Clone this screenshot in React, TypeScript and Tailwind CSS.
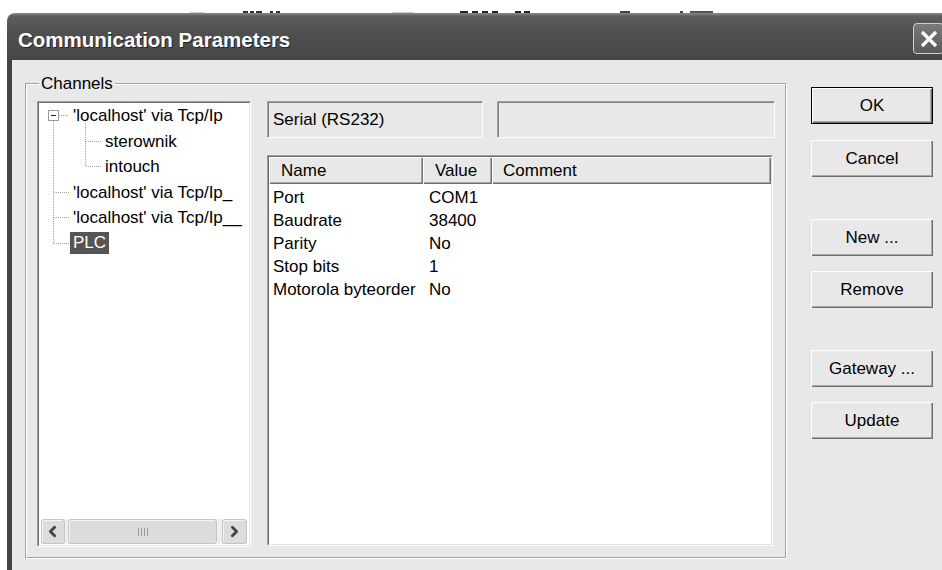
import { ChevronLeft, ChevronRight } from "lucide-react";

type Node = { label: string; depth: number; selected?: boolean };

const channels: Node[] = [
  { label: "'localhost' via Tcp/Ip", depth: 0 },
  { label: "sterownik", depth: 1 },
  { label: "intouch", depth: 1 },
  { label: "'localhost' via Tcp/Ip_", depth: 0 },
  { label: "'localhost' via Tcp/Ip__", depth: 0 },
  { label: "PLC", depth: 0, selected: true },
];

const params = [
  { name: "Port", value: "COM1" },
  { name: "Baudrate", value: "38400" },
  { name: "Parity", value: "No" },
  { name: "Stop bits", value: "1" },
  { name: "Motorola byteorder", value: "No" },
];

const raised = "shadow-[inset_1px_1px_#ffffff,inset_-1px_-1px_#6e6e6e,inset_-2px_-2px_#a8a8a8]";

function Sunken({ className, children }: { className: string; children?: React.ReactNode }) {
  return (
    <div className={`border border-t-[#a0a0a0] border-l-[#a0a0a0] border-r-white border-b-white ${className}`}>
      <div className="flex h-full flex-col border border-t-[#696969] border-l-[#696969] border-r-[#e3e3e3] border-b-[#e3e3e3] bg-white">
        {children}
      </div>
    </div>
  );
}

function StaticBox({ className, text }: { className: string; text?: string }) {
  return (
    <div className={`h-[37px] border border-t-[#a0a0a0] border-l-[#a0a0a0] border-r-white border-b-white ${className}`}>
      <div className="flex h-full items-center border-t border-l border-t-[#808080] border-l-[#808080] pl-[4px]">{text}</div>
    </div>
  );
}

function DlgButton({ label, isDefault }: { label: string; isDefault?: boolean }) {
  return (
    <button
      type="button"
      className={`h-[37px] w-[122px] bg-[#e8e8e8] text-[17px] text-black ${raised} ${isDefault ? "border border-black" : ""}`}
    >
      {label}
    </button>
  );
}

function TreeLines() {
  // dotted connectors + the collapse box of the first root
  const dot = { stroke: "#a0a0a0", strokeDasharray: "1 1", strokeWidth: 1 };
  return (
    <svg className="pointer-events-none absolute left-0 top-0" width="210" height="160">
      <line x1="14.5" y1="18" x2="14.5" y2="141" {...dot} />
      <line x1="20" y1="12.5" x2="30" y2="12.5" {...dot} />
      <line x1="15" y1="89.5" x2="30" y2="89.5" {...dot} />
      <line x1="15" y1="114.5" x2="30" y2="114.5" {...dot} />
      <line x1="15" y1="140.5" x2="30" y2="140.5" {...dot} />
      <line x1="46.5" y1="20" x2="46.5" y2="64" {...dot} />
      <line x1="47" y1="38.5" x2="62" y2="38.5" {...dot} />
      <line x1="47" y1="63.5" x2="62" y2="63.5" {...dot} />
      <rect x="9.5" y="7.5" width="10" height="10" fill="#fff" stroke="#9a9a9a" />
      <line x1="12" y1="12.5" x2="17" y2="12.5" stroke="#222" />
    </svg>
  );
}

function ScrollBar() {
  return (
    <div className="mx-[2px] mb-[1px] flex h-[25px] items-stretch bg-[#efefef]">
      <div className="flex w-[24px] items-center justify-center rounded-[3px] border border-[#c4c4c4] bg-[#dcdcdc] shadow-[inset_1px_1px_#f4f4f4]">
        <ChevronLeft size={17} strokeWidth={4} color="#454545" />
      </div>
      <div className="ml-[3px] flex w-[150px] items-center justify-center gap-[2px] rounded-[3px] border border-[#c4c4c4] bg-[#dcdcdc] shadow-[inset_1px_1px_#f4f4f4]">
        <span className="h-[8px] w-px bg-[#9c9c9c]" />
        <span className="h-[8px] w-px bg-[#9c9c9c]" />
        <span className="h-[8px] w-px bg-[#9c9c9c]" />
        <span className="h-[8px] w-px bg-[#9c9c9c]" />
      </div>
      <div className="ml-[5px] flex w-[25px] items-center justify-center rounded-[3px] border border-[#c4c4c4] bg-[#dcdcdc] shadow-[inset_1px_1px_#f4f4f4]">
        <ChevronRight size={17} strokeWidth={4} color="#454545" />
      </div>
    </div>
  );
}

export default function App() {
  return (
    <div className="h-[570px] w-[942px] overflow-hidden bg-white font-['Liberation_Sans',Arial,sans-serif] text-[17px] text-black">
      {/* bits of the window behind, peeking over the title bar */}
      <div className="relative h-[13px]">
        <span className="absolute left-[190px] top-[12px] h-px w-[14px] bg-[#c8c8c8]" />
        <span className="absolute left-[243px] top-[11px] h-[2px] w-[5px] bg-[#333]" />
        <span className="absolute left-[250px] top-[11px] h-[2px] w-[4px] bg-[#333]" />
        <span className="absolute left-[256px] top-[11px] h-[2px] w-[6px] bg-[#333]" />
        <span className="absolute left-[270px] top-[11px] h-[2px] w-[3px] bg-[#333]" />
        <span className="absolute left-[276px] top-[11px] h-[2px] w-[4px] bg-[#333]" />
        <span className="absolute left-[392px] top-[12px] h-px w-[22px] bg-[#c8c8c8]" />
        <span className="absolute left-[460px] top-[11px] h-[2px] w-[8px] bg-[#222]" />
        <span className="absolute left-[472px] top-[11px] h-[2px] w-[6px] bg-[#222]" />
        <span className="absolute left-[482px] top-[11px] h-[2px] w-[6px] bg-[#222]" />
        <span className="absolute left-[492px] top-[11px] h-[2px] w-[6px] bg-[#222]" />
        <span className="absolute left-[515px] top-[11px] h-[2px] w-[6px] bg-[#222]" />
        <span className="absolute left-[524px] top-[11px] h-[2px] w-[6px] bg-[#222]" />
        <span className="absolute left-[620px] top-[11px] h-[2px] w-[10px] bg-[#444]" />
        <span className="absolute left-[680px] top-[11px] h-[2px] w-[3px] bg-[#444]" />
        <span className="absolute left-[690px] top-[11px] h-[2px] w-[23px] bg-[#555]" />
      </div>

      <div className="ml-[7px] flex h-[557px] w-[940px] flex-col overflow-hidden rounded-tl-[8px]">
        <div className="flex h-[47px] shrink-0 items-start bg-[linear-gradient(to_bottom,#8c8c8c_0px,#5e5e5e_3px,#505050_18px,#474747_100%)] pl-[11px]">
          <span className="mt-[16px] text-[20.5px] font-bold leading-[21px] text-white [text-shadow:1px_1px_#262626]">
            Communication Parameters
          </span>
          <div className="ml-auto mr-[3px] mt-[10px] flex h-[31px] w-[31px] items-center justify-center rounded-[4px] border border-[#d0d0d0] bg-[linear-gradient(to_bottom,#7a7a7a,#5a5a5a)]">
            <svg width="20" height="20" viewBox="0 0 20 20">
              <path d="M3 3L17 17M17 3L3 17" stroke="#fff" strokeWidth="3.2" />
            </svg>
          </div>
        </div>

        <div className="flex flex-1 items-start border-l-[5px] border-l-[#434343] bg-[#e8e8e8] pl-[13px] pt-[23px]">
          {/* Channels group */}
          <div className="relative h-[476px] w-[762px] border border-t-[#a0a0a0] border-l-[#a0a0a0] border-r-white border-b-white">
            <div className="flex h-full border border-t-white border-l-white border-r-[#a0a0a0] border-b-[#a0a0a0] pl-[10px] pt-[16px]">
              <Sunken className="h-[446px] w-[214px]">
                <div className="relative flex flex-col">
                  <TreeLines />
                  {channels.map((n) => (
                    <div
                      key={n.label}
                      className={`flex h-[25.5px] items-center ${n.depth === 1 ? "pl-[66px]" : "pl-[31px]"}`}
                    >
                      {n.selected ? (
                        <span className="bg-[#555555] px-[3px] leading-[22px] text-white">{n.label}</span>
                      ) : (
                        <span className={n.depth === 1 ? "" : "pl-[3px]"}>{n.label}</span>
                      )}
                    </div>
                  ))}
                </div>
                <div className="mt-auto">
                  <ScrollBar />
                </div>
              </Sunken>

              <div className="ml-[16px] flex flex-col">
                <div className="flex">
                  <StaticBox className="w-[216px]" text="Serial (RS232)" />
                  <StaticBox className="ml-[14px] w-[278px]" />
                </div>
                <Sunken className="mt-[17px] h-[391px] w-[506px]">
                  <div className="flex h-[27px] shrink-0 bg-[#e8e8e8]">
                    <div className={`flex w-[154px] items-center pl-[12px] ${raised}`}>Name</div>
                    <div className={`flex w-[69px] items-center pl-[12px] ${raised}`}>Value</div>
                    <div className={`flex flex-1 items-center pl-[11px] ${raised}`}>Comment</div>
                  </div>
                  <div className="pt-[2px]">
                    {params.map((p) => (
                      <div key={p.name} className="flex h-[23px] items-center">
                        <span className="w-[154px] pl-[4px]">{p.name}</span>
                        <span className="pl-[6px]">{p.value}</span>
                      </div>
                    ))}
                  </div>
                </Sunken>
              </div>
            </div>
            <span className="absolute left-[13px] top-[-10px] bg-[#e8e8e8] px-[2px] leading-[20px]">Channels</span>
          </div>

          {/* dialog buttons */}
          <div className="ml-[24px] mt-[4px] flex flex-col">
            <DlgButton label="OK" isDefault />
            <div className="mt-[16px]">
              <DlgButton label="Cancel" />
            </div>
            <div className="mt-[42px]">
              <DlgButton label="New ..." />
            </div>
            <div className="mt-[15px]">
              <DlgButton label="Remove" />
            </div>
            <div className="mt-[42px]">
              <DlgButton label="Gateway ..." />
            </div>
            <div className="mt-[15px]">
              <DlgButton label="Update" />
            </div>
          </div>
        </div>
      </div>
    </div>
  );
}
